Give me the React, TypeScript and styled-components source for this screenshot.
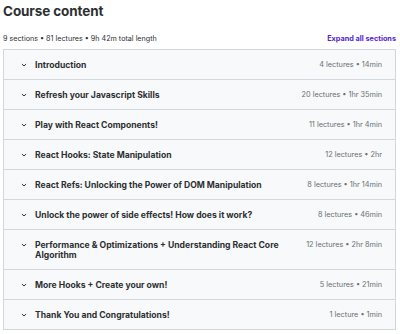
import React from "react";
import styled, { createGlobalStyle } from "styled-components";

const Global = createGlobalStyle`
  html, body { margin: 0; padding: 0; background: #ffffff; }
  body { font-family: Inter, "Noto Sans", sans-serif; color: #2d2f31; }
`;

const Page = styled.div`
  width: 393px;
  padding: 3px 4px 0 3px;
`;

const Title = styled.h2`
  margin: 0;
  font-size: 13.5px;
  line-height: 16px;
  font-weight: 700;
  letter-spacing: -0.1px;
  color: #2d2f31;
`;

const Summary = styled.div`
  display: flex;
  justify-content: space-between;
  align-items: center;
  margin-top: 13px;
  height: 12px;
  font-size: 7.2px;
`;

const Stats = styled.span`
  color: #2d2f31;
`;

const Expand = styled.button`
  border: none;
  background: none;
  padding: 0;
  font-family: inherit;
  font-size: 7.3px;
  font-weight: 700;
  color: #5624d0;
  cursor: pointer;
`;

const Box = styled.div`
  margin-top: 5px;
  border: 1px solid #d1d7dc;
  border-bottom: none;
`;

const Row = styled.div`
  display: flex;
  align-items: flex-start;
  gap: 7px;
  padding: 10px 13px 9px 16px;
  background: #f7f9fa;
  border-bottom: 1px solid #d1d7dc;
  line-height: 10px;
`;

const Chevron = styled.svg`
  flex: none;
  width: 8px;
  height: 10px;
`;

const SectionTitle = styled.div`
  flex: 1;
  font-size: 8.6px;
  font-weight: 700;
  color: #2d2f31;
`;

const Meta = styled.div`
  flex: none;
  font-size: 7.3px;
  color: #6a6f73;
  padding-left: 14px;
`;

const sections: [string, string][] = [
  ["Introduction", "4 lectures • 14min"],
  ["Refresh your Javascript Skills", "20 lectures • 1hr 35min"],
  ["Play with React Components!", "11 lectures • 1hr 4min"],
  ["React Hooks: State Manipulation", "12 lectures • 2hr"],
  ["React Refs: Unlocking the Power of DOM Manipulation", "8 lectures • 1hr 14min"],
  ["Unlock the power of side effects! How does it work?", "8 lectures • 46min"],
  ["Performance & Optimizations + Understanding React Core Algorithm", "12 lectures • 2hr 8min"],
  ["More Hooks + Create your own!", "5 lectures • 21min"],
  ["Thank You and Congratulations!", "1 lecture • 1min"],
];

export default function App() {
  return (
    <Page>
      <Global />
      <Title>Course content</Title>
      <Summary>
        <Stats>9 sections • 81 lectures • 9h 42m total length</Stats>
        <Expand>Expand all sections</Expand>
      </Summary>
      <Box>
        {sections.map(([t, m]) => (
          <Row key={t}>
            <Chevron viewBox="0 0 8 10">
              <path d="M2.2 4.3 L4 6 L5.8 4.3" fill="none" stroke="#2d2f31" strokeWidth="1" strokeLinecap="round" strokeLinejoin="round" />
            </Chevron>
            <SectionTitle>{t}</SectionTitle>
            <Meta>{m}</Meta>
          </Row>
        ))}
      </Box>
    </Page>
  );
}
